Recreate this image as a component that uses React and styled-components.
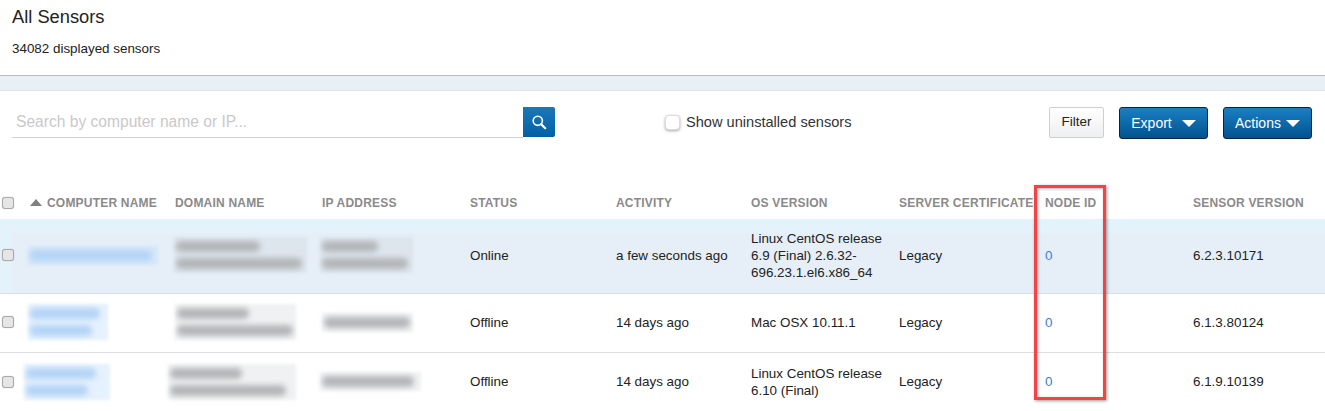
import React from "react";
import styled, { createGlobalStyle } from "styled-components";

const GlobalStyle = createGlobalStyle`
  html, body { margin: 0; padding: 0; background: #fff; }
  body {
    width: 1325px;
    height: 411px;
    overflow: hidden;
    font-family: "Liberation Sans", Arial, sans-serif;
    color: #222;
  }
`;

const COLUMNS = "28px 147px 147px 148px 146px 135px 148px 146px 148px 132px";

const rows = [
  {
    id: 1,
    height: 75,
    lift: 2,
    active: true,
    status: "Online",
    activity: "a few seconds ago",
    os: ["Linux CentOS release", "6.9 (Final) 2.6.32-", "696.23.1.el6.x86_64"],
    version: "6.2.3.10171",
    name: { x: 0, w: 130, lines: [122] },
    domain: { x: -1, w: 133, lines: [84, 126] },
    ip: { x: -2, w: 93, lines: [56, 86] },
  },
  {
    id: 2,
    height: 59,
    lift: 2,
    status: "Offline",
    activity: "14 days ago",
    os: ["Mac OSX 10.11.1"],
    version: "6.1.3.80124",
    name: { x: 0, w: 80, lines: [70, 62] },
    domain: { x: 0, w: 121, lines: [72, 116] },
    ip: { x: 0, w: 91, lines: [86] },
  },
  {
    id: 3,
    height: 59,
    lift: 1,
    status: "Offline",
    activity: "14 days ago",
    os: ["Linux CentOS release", "6.10 (Final)"],
    version: "6.1.9.10139",
    name: { x: -4, w: 86, lines: [70, 62] },
    domain: { x: -7, w: 128, lines: [72, 116] },
    ip: { x: -2, w: 101, lines: [92] },
  },
];

const headers = [
  "DOMAIN NAME",
  "IP ADDRESS",
  "STATUS",
  "ACTIVITY",
  "OS VERSION",
  "SERVER CERTIFICATE",
  "NODE ID",
  "SENSOR VERSION",
];

function BlurredText({ data, tone }) {
  return (
    <Redacted $x={data.x} $w={data.w} $tone={tone}>
      {data.lines.map((w, i) => (
        <RedactedLine key={i} $w={w} $tone={tone} />
      ))}
    </Redacted>
  );
}

export default function App() {
  return (
    <Page>
      <GlobalStyle />
      <TitleBlock>
        <Title>All Sensors</Title>
        <Count>34082 displayed sensors</Count>
      </TitleBlock>
      <Band />
      <Toolbar>
        <SearchGroup>
          <SearchInput placeholder="Search by computer name or IP..." readOnly />
          <SearchButton type="button" aria-label="Search">
            <svg width="16" height="16" viewBox="0 0 16 16" fill="none" stroke="#fff">
              <circle cx="6.8" cy="6.8" r="4.6" strokeWidth="1.6" />
              <path d="M10.2 10.2 L14.2 14.2" strokeWidth="2.2" strokeLinecap="round" />
            </svg>
          </SearchButton>
        </SearchGroup>
        <Toggle>
          <RoundCheck />
          Show uninstalled sensors
        </Toggle>
        <Buttons>
          <FilterButton type="button">Filter</FilterButton>
          <PrimaryButton type="button" $gap={10}>
            Export <Caret />
          </PrimaryButton>
          <PrimaryButton type="button" $gap={5}>
            Actions <Caret />
          </PrimaryButton>
        </Buttons>
      </Toolbar>
      <Table>
        <HeadRow>
          <CheckCell>
            <SquareCheck />
          </CheckCell>
          <HeadCell>
            <SortArrow />
            COMPUTER NAME
          </HeadCell>
          {headers.map((label) => (
            <HeadCell key={label}>{label}</HeadCell>
          ))}
        </HeadRow>
        {rows.map((row) => (
          <Row key={row.id} $height={row.height} $lift={row.lift} $active={row.active}>
            <CheckCell>
              <SquareCheck />
            </CheckCell>
            <Cell>
              <BlurredText data={row.name} tone="blue" />
            </Cell>
            <Cell>
              <BlurredText data={row.domain} />
            </Cell>
            <Cell>
              <BlurredText data={row.ip} />
            </Cell>
            <Cell>{row.status}</Cell>
            <Cell>{row.activity}</Cell>
            <Cell>
              <div>
                {row.os.map((line) => (
                  <div key={line}>{line}</div>
                ))}
              </div>
            </Cell>
            <Cell>Legacy</Cell>
            <Cell>
              <NodeLink>0</NodeLink>
            </Cell>
            <Cell>{row.version}</Cell>
          </Row>
        ))}
      </Table>
      <Highlight />
    </Page>
  );
}

const Page = styled.div`
  position: relative;
  width: 1325px;
  height: 411px;
  overflow: hidden;
  background: #fff;
`;

const TitleBlock = styled.div`
  height: 76px;
  box-sizing: border-box;
  padding: 8px 12px 0;
  border-bottom: 1px solid #b4bbc2;
`;

const Title = styled.h1`
  margin: 0;
  font-size: 18.3px;
  font-weight: 400;
  line-height: 18px;
  color: #222;
`;

const Count = styled.div`
  margin-top: 15px;
  font-size: 13.4px;
  line-height: 16px;
  color: #222;
`;

const Band = styled.div`
  height: 15px;
  background: #e8eff5;
  border-bottom: 1px solid #dfe5ea;
  box-sizing: border-box;
`;

const Toolbar = styled.div`
  height: 95px;
  box-sizing: border-box;
  padding: 16px 13px 0 12px;
  display: flex;
  align-items: flex-start;
`;

const SearchGroup = styled.div`
  display: flex;
  width: 543px;
  height: 30px;
`;

const SearchInput = styled.input`
  flex: 1;
  min-width: 0;
  box-sizing: border-box;
  height: 31px;
  padding: 0 4px;
  border: 0;
  border-bottom: 1px solid #cfd2d4;
  outline: none;
  background: transparent;
  font-family: inherit;
  font-size: 15.6px;

  &::placeholder {
    color: #c9c9c9;
    opacity: 1;
  }
`;

const SearchButton = styled.button`
  width: 32px;
  height: 30px;
  padding: 0;
  display: flex;
  align-items: center;
  justify-content: center;
  border: 0;
  border-radius: 0 2px 2px 0;
  background: linear-gradient(#1a78b8, #0460a6);
`;

const Toggle = styled.label`
  display: flex;
  align-items: center;
  gap: 6px;
  margin-left: 110px;
  height: 30px;
  font-size: 14.6px;
  color: #333;
`;

const RoundCheck = styled.span`
  width: 13px;
  height: 13px;
  border-radius: 4px;
  background: #fff;
  border: 1px solid #ddd;
  box-shadow: 0 1px 3px rgba(0, 0, 0, 0.35);
`;

const Buttons = styled.div`
  margin-left: auto;
  display: flex;
  gap: 15px;
`;

const FilterButton = styled.button`
  width: 55px;
  height: 31px;
  padding: 0 0 3px;
  border: 1px solid #cfcfcf;
  border-radius: 2px;
  background: linear-gradient(#fff, #eeeff0);
  font-family: inherit;
  font-size: 13.4px;
  color: #222;
`;

const PrimaryButton = styled.button`
  width: 89px;
  height: 32px;
  padding: 0;
  display: flex;
  align-items: center;
  justify-content: center;
  gap: ${(p) => p.$gap}px;
  border: 1px solid #0a2238;
  border-radius: 3px;
  background: linear-gradient(#1a7fc4, #02528e);
  font-family: inherit;
  font-size: 14px;
  color: #fff;
`;

const Caret = styled.span`
  width: 0;
  height: 0;
  border-left: 7px solid transparent;
  border-right: 7px solid transparent;
  border-top: 7px solid #fff;
`;

const Table = styled.div`
  display: flex;
  flex-direction: column;
`;

const HeadRow = styled.div`
  display: grid;
  grid-template-columns: ${COLUMNS};
  height: 33px;
  align-items: center;
`;

const HeadCell = styled.div`
  display: flex;
  align-items: center;
  white-space: nowrap;
  font-size: 12px;
  font-weight: 700;
  letter-spacing: 0.2px;
  color: #8a8a8a;
`;

const SortArrow = styled.span`
  width: 0;
  height: 0;
  margin: 0 5px 0 2px;
  border-left: 6px solid transparent;
  border-right: 6px solid transparent;
  border-bottom: 7px solid #808080;
`;

const Row = styled.div`
  display: grid;
  grid-template-columns: ${COLUMNS};
  height: ${(p) => p.$height}px;
  box-sizing: border-box;
  padding-bottom: ${(p) => p.$lift}px;
  align-items: center;
  border-bottom: 1px solid #dcdfe3;
  background: ${(p) => (p.$active ? "#e6eff8" : "#fff")};
  box-shadow: ${(p) => (p.$active ? "inset 12px 14px 0 #e4f2fc" : "none")};
  font-size: 13.4px;
  line-height: 17px;
  color: #222;
`;

const CheckCell = styled.div`
  display: flex;
  padding-left: 2px;
`;

const SquareCheck = styled.span`
  width: 12px;
  height: 12px;
  box-sizing: border-box;
  border: 1px solid #a9a9a9;
  border-radius: 3px;
  background: #e6e6e6;
  box-shadow: 0 0 1px rgba(0, 0, 0, 0.3);
`;

const Cell = styled.div`
  white-space: nowrap;
  display: flex;
  align-items: center;
`;

// blurred-out customer data: a soft tinted patch with smeared lines on top
const Redacted = styled.div`
  display: flex;
  flex-direction: column;
  gap: 6px;
  width: ${(p) => p.$w}px;
  box-sizing: border-box;
  padding: 4px 2px;
  margin-left: ${(p) => p.$x}px;
  background: ${(p) => (p.$tone === "blue" ? "rgba(190, 220, 250, 0.4)" : "rgba(195, 198, 202, 0.25)")};
  filter: blur(1.5px);
`;

const RedactedLine = styled.div`
  width: ${(p) => p.$w}px;
  height: 11px;
  border-radius: 5px;
  filter: blur(2.5px);
  background: ${(p) => (p.$tone === "blue" ? "#b4d4f6" : "#b4b6b9")};
`;

const NodeLink = styled.span`
  color: #3a7fd5;
`;

const Highlight = styled.div`
  position: absolute;
  left: 1034px;
  top: 185px;
  width: 72px;
  height: 215px;
  box-sizing: border-box;
  border: 3px solid #f44347;
  box-shadow: 1px 1px 3px rgba(0, 0, 0, 0.4), inset 1px 1px 3px rgba(0, 0, 0, 0.3);
  pointer-events: none;
`;
